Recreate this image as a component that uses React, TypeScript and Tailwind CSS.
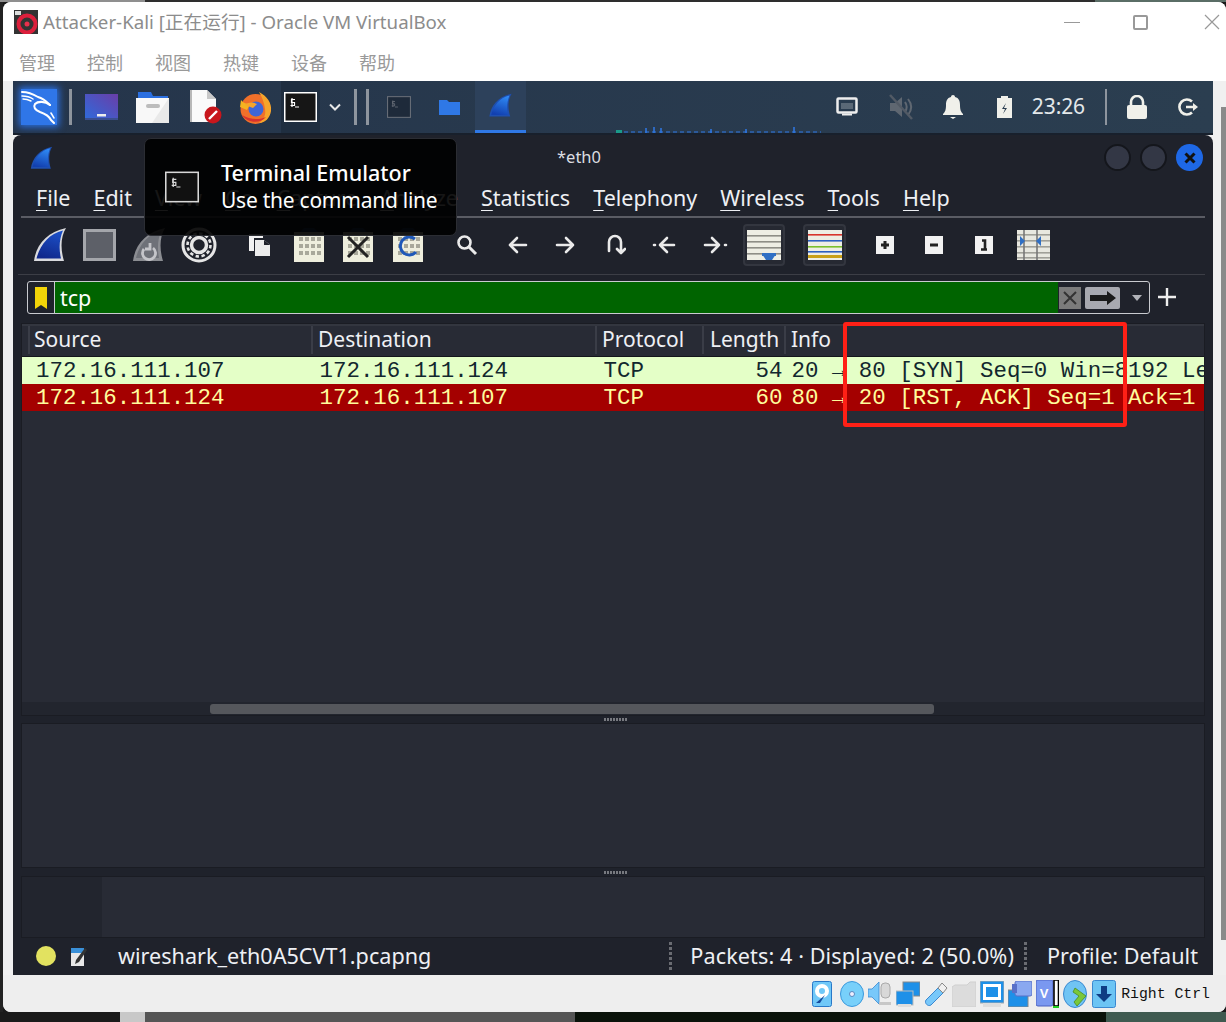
import React from "react";

const ui = { fontFamily: '"Noto Sans","Noto Sans CJK SC",sans-serif' };
const mono = { fontFamily: '"Liberation Mono",monospace' };

const Fin = ({ w = 34, h = 36, c1 = "#1f6fe8", c2 = "#122f96", edge = "#d9dade" }: { w?: number; h?: number; c1?: string; c2?: string; edge?: string }) => {
  const id = "f" + c1.slice(1) + edge.slice(1);
  return (
    <svg width={w} height={h} viewBox="0 0 34 36">
      <defs>
        <linearGradient id={id} x1="0.7" y1="0" x2="0.4" y2="1">
          <stop offset="0" stopColor={c1} />
          <stop offset="1" stopColor={c2} />
        </linearGradient>
      </defs>
      <path d="M1 34C3 18 14 5 33 1c-5 8-6 20-2 33z" fill={edge} />
      <path d="M3.500 31.500C7 18 16 6.500 30 3.500c-3.500 8-4.500 18-2 28z" fill={`url(#${id})`} />
    </svg>
  );
};

const KaliTile = () => (
  <div className="w-[36px] h-[36px] bg-[#2f76e8] shadow-[0_0_7px_2px_#2a6fe0]">
    <svg width="36" height="36" viewBox="0 0 36 36" fill="none" stroke="#fff" strokeLinecap="round" strokeLinejoin="round">
      <path d="M1 3c6 0 11 2 16 5 4 1 8 4 12 8" strokeWidth="2" />
      <path d="M1 7c4 0 8 1 11 3M2 10c3 0 6 1 8 2" strokeWidth="1.5" />
      <path d="M29 16c-5-4-12-4-15-1-2 3 0 6 5 8 6 2 9 4 11 8l3 3" strokeWidth="2.100" />
      <path d="M30 24l3 5" strokeWidth="1.500" />
    </svg>
  </div>
);

const Workspace = () => (
  <svg width="33" height="27" viewBox="0 0 33 27">
    <defs>
      <linearGradient id="ws" x1="0" y1="1" x2="1" y2="0">
        <stop offset="0" stopColor="#2e6bdc" />
        <stop offset="1" stopColor="#6a3ea8" />
      </linearGradient>
    </defs>
    <rect width="33" height="26" fill="url(#ws)" />
    <rect x="0" y="24" width="33" height="2" fill="#3a4e90" />
    <rect x="12" y="20" width="9" height="2.5" fill="#eee" />
  </svg>
);

const FolderOpen = () => (
  <svg width="33" height="32" viewBox="0 0 33 32">
    <path d="M2 1h13l2 4h15v6H2z" fill="#2b6fe0" />
    <rect y="7" width="33" height="25" fill="#f8f8f8" />
    <path d="M33 7v25H16z" fill="#e9e9e9" />
    <rect x="10" y="13" width="14" height="4" rx="2" fill="#bcbcbc" />
  </svg>
);

const DocEdit = () => (
  <svg width="32" height="34" viewBox="0 0 32 34">
    <path d="M1 0h16l9 9v23H1z" fill="#fafafa" />
    <path d="M17 0l9 9h-9z" fill="#c8c8c8" />
    <rect width="2" height="32" fill="#b8b8b8" />
    <circle cx="23" cy="25" r="8.5" fill="#c8161c" />
    <path d="M19 29l8-8" stroke="#fff" strokeWidth="2.4" />
  </svg>
);

const Firefox = () => (
  <svg width="33" height="33" viewBox="0 0 33 33">
    <circle cx="16.5" cy="18" r="15" fill="#f0702a" />
    <path d="M20 1c8 4 13 11 12 19-1 7-6 12-12 12 5-4 7-8 6-14-1-7-3-12-6-17z" fill="#f7a52b" />
    <path d="M2 9c2 3 6 4 9 4l-3 6-7-3z" fill="#f5b320" />
    <circle cx="17" cy="18" r="7.5" fill="#3f66d8" />
    <path d="M6 14c4-3 8-3 12-1l-4 4z" fill="#f7a52b" />
    <path d="M3 24c4 7 17 10 24 2-6 3-16 3-24-2z" fill="#d8322e" />
  </svg>
);

const Term = ({ w = 33, h = 30, c = "#fff", bg = "#161616" }: { w?: number; h?: number; c?: string; bg?: string }) => (
  <svg width={w} height={h} viewBox="0 0 33 30">
    <rect x=".75" y=".75" width="31.5" height="28.5" fill={bg} stroke={c} strokeWidth="1.5" />
    <path d="M8 6v9M11 7.500H7.500v3h3v3H6.500M11 15h4" stroke={c} strokeWidth="1.2" fill="none" />
  </svg>
);

const Chevron = () => (
  <svg width="12" height="8" viewBox="0 0 12 8" fill="none">
    <path d="M1 1.500l5 5 5-5" stroke="#e8e8e8" strokeWidth="2" />
  </svg>
);

const BlueFolder = () => (
  <svg width="21" height="15" viewBox="0 0 21 15">
    <path d="M0 0h8l2 2h11v13H0z" fill="#2f78e6" />
  </svg>
);

const Net = () => (
  <svg width="22" height="20" viewBox="0 0 22 20" fill="none">
    <rect x="1.500" y="1.500" width="19" height="14" rx="1" stroke="#eee" strokeWidth="2.500" />
    <path d="M5 6h12v6H5z" fill="#eee" opacity=".25" />
    <path d="M6 16.500h10v2H6z" fill="#eee" />
  </svg>
);

const Muted = () => (
  <svg width="28" height="28" viewBox="0 0 28 28" fill="none">
    <path d="M3 10h5l7-6v20l-7-6H3z" fill="#5f6771" />
    <path d="M18 9c2 3 2 7 0 10M21 6c4 5 4 11 0 16" stroke="#5f6771" strokeWidth="2" />
    <path d="M3 2l22 24" stroke="#525a65" strokeWidth="2.500" />
  </svg>
);

const Bell = () => (
  <svg width="22" height="24" viewBox="0 0 22 24">
    <path d="M11 0c1.200 0 2 .8 2 2 4 1 5 4 5 8 0 5 1 7 3 9v1H1v-1c2-2 3-4 3-9 0-4 1-7 5-8 0-1.200.8-2 2-2z" fill="#f0f0ea" />
    <path d="M8 22h6l-3 2z" fill="#f0f0ea" />
  </svg>
);

const Battery = () => (
  <svg width="15" height="22" viewBox="0 0 15 22">
    <path d="M4 0h7v2h4v20H0V2h4z" fill="#f0f0ea" />
    <path d="M9 7l-4 6h3l-2 5 4-6H7z" fill="#2a3d50" />
  </svg>
);

const Lock = () => (
  <svg width="20" height="24" viewBox="0 0 20 24" fill="none">
    <path d="M4 11V7a6 6 0 0 1 12 0v4" stroke="#f0f0ea" strokeWidth="2.600" />
    <rect y="10" width="20" height="14" rx="2" fill="#f0f0ea" />
  </svg>
);

const Logout = () => (
  <svg width="22" height="20" viewBox="0 0 22 20" fill="none">
    <path d="M15 4.500A7.500 7.500 0 1 0 15 15.500" stroke="#f0f0ea" strokeWidth="2.600" />
    <path d="M9 10h9" stroke="#f0f0ea" strokeWidth="2.600" />
    <path d="M16 6l5 4-5 4z" fill="#f0f0ea" />
  </svg>
);

const StopIcon = () => <div className="w-[33px] h-[32px] bg-[#5d6068] border-[3px] border-[#a4a6ab]" />;

const RestartFin = () => (
  <svg width="34" height="36" viewBox="0 0 34 36">
    <path d="M1 34C3 18 14 5 33 1c-5 8-6 20-2 33z" fill="#8b8d92" />
    <path d="M4 31C7 18 16 7 29 4c-3 8-4 17-2 27z" fill="#6e7178" />
    <path d="M12 22a6.500 6.500 0 1 0 9 -1M18 16v6h-5" fill="none" stroke="#c4c5c9" strokeWidth="2.800" />
  </svg>
);

const Gear = () => (
  <svg width="36" height="36" viewBox="0 0 36 36" fill="none">
    <circle cx="18" cy="18" r="16" stroke="#e6e6e6" strokeWidth="3" />
    <circle cx="18" cy="18" r="7.500" stroke="#e6e6e6" strokeWidth="3.500" />
    <circle cx="18" cy="18" r="11.500" stroke="#e6e6e6" strokeWidth="2.600" strokeDasharray="3.400 2.600" />
  </svg>
);

const OpenFile = () => (
  <svg width="22" height="22" viewBox="0 0 22 22">
    <path d="M0 0h14v4H5v13H0z" fill="#f2f2f2" />
    <path d="M6 6h9l6 5v11H6z" fill="#ececec" />
    <path d="M15 6v5h6z" fill="#1f222b" />
  </svg>
);

const Sheet = ({ children }: { children?: React.ReactNode }) => (
  <div className="relative w-[30px] h-[34px]">
    <svg width="30" height="34" viewBox="0 0 30 34" className="absolute inset-0">
      <path d="M10 0h10l4 4H6z" fill="#24456f" />
      <rect y="4" width="30" height="30" fill="#eeeedd" />
      <g fill="#a8a89a">
        {[9, 16, 23].map((y) => [5, 11, 17, 23].map((x) => <rect key={`${x}-${y}`} x={x} y={y} width="4" height="4" />))}
      </g>
    </svg>
    {children}
  </div>
);

const Glyph = ({ d, w = 24, h = 22 }: { d: string; w?: number; h?: number }) => (
  <svg width={w} height={h} viewBox={`0 0 ${w} ${h}`} fill="none" stroke="#eaeaea" strokeWidth="2.600" strokeLinecap="round" strokeLinejoin="round">
    <path d={d} />
  </svg>
);

const Search = () => (
  <svg width="22" height="22" viewBox="0 0 22 22" fill="none">
    <circle cx="8.500" cy="8.500" r="6" stroke="#eaeaea" strokeWidth="2.600" />
    <path d="M13 13l7 7" stroke="#eaeaea" strokeWidth="3" />
  </svg>
);

const AutoScroll = () => (
  <svg width="34" height="30" viewBox="0 0 34 30">
    <rect width="34" height="30" fill="#eeeee4" />
    {[5, 11, 17, 23].map((y) => (
      <rect key={y} y={y} width="34" height="1.600" fill="#8e8e86" />
    ))}
    <path d="M15 24h14l-4 6h-6z" fill="#2f6fc4" />
    <rect x="15" y="23" width="14" height="3" fill="#2f6fc4" />
  </svg>
);

const Colorize = () => (
  <svg width="34" height="30" viewBox="0 0 34 30">
    <rect width="34" height="30" fill="#eeeee4" />
    <rect y="4" width="34" height="1.600" fill="#d8342c" />
    <rect y="10" width="34" height="1.600" fill="#2c5fc0" />
    <rect y="16" width="34" height="1.600" fill="#7ac02c" />
    <rect y="21" width="34" height="1.600" fill="#2c5fc0" />
    <rect y="25" width="34" height="3" fill="#c8a018" />
  </svg>
);

const Tile = ({ k }: { k: string }) => (
  <svg width="18" height="18" viewBox="0 0 18 18">
    <rect width="18" height="18" fill="#f2f2f2" />
    {k === "+" && <path d="M9 5v8M5 9h8" stroke="#222" strokeWidth="3" />}
    {k === "-" && <path d="M5 9h8" stroke="#222" strokeWidth="3" />}
    {k === "1" && <path d="M7 4.500h3v9M6 13.500h6" stroke="#222" strokeWidth="2.600" fill="none" />}
  </svg>
);

const ResizeCols = () => (
  <svg width="33" height="30" viewBox="0 0 33 30">
    <rect width="33" height="30" fill="#e8e8e0" />
    {[4, 10, 16, 22, 27].map((y) => (
      <rect key={y} y={y} width="33" height="1.600" fill="#a0a098" />
    ))}
    <path d="M7 0v30M20 0v30" stroke="#777" strokeWidth="1.600" />
    <path d="M3 6l5 5-5 5zM24 6l-5 5 5 5z" fill="#2f6fc4" />
  </svg>
);

const HddIcon = () => (
  <svg width="20" height="26" viewBox="0 0 20 26">
    <rect x=".5" y=".5" width="19" height="25" rx="2" fill="#70c8f8" stroke="#2878c8" />
    <circle cx="10" cy="10" r="5" fill="none" stroke="#fff" strokeWidth="4" />
    <path d="M13 14l-5 8H4z" fill="#154a9c" />
  </svg>
);
const Cd = () => (
  <svg width="24" height="26" viewBox="0 0 24 26">
    <ellipse cx="12" cy="13" rx="11.500" ry="12.500" fill="#78d0fa" stroke="#3a98dc" />
    <circle cx="12" cy="13" r="2.500" fill="#eef" stroke="#5a8ac0" />
  </svg>
);
const Audio = () => (
  <svg width="24" height="26" viewBox="0 0 24 26">
    <path d="M0 8h4l7-7v22l-7-7H0z" fill="#78c8fa" stroke="#3a88d0" strokeWidth=".8" />
    <rect x="13" y="2" width="9" height="15" rx="4" fill="#d8d8d8" stroke="#aaa" />
    <path d="M11 21h12v3H11z" fill="#c8c8c8" />
  </svg>
);
const Nets = () => (
  <svg width="24" height="26" viewBox="0 0 24 26">
    <rect x="7" y="1" width="17" height="14" fill="#1e90e8" stroke="#888" />
    <rect x="0" y="10" width="17" height="14" fill="#1e90e8" stroke="#bbb" />
    <rect x="2" y="23" width="13" height="3" fill="#ddd" />
  </svg>
);
const Usb = () => (
  <svg width="24" height="26" viewBox="0 0 24 26">
    <path d="M2 19L14 7l5 5L7 24c-3 2-7-2-5-5z" fill="#78c8fa" stroke="#3a88d0" />
    <path d="M14 7l4-5 5 5-4 5z" fill="#f0f0f0" stroke="#888" />
  </svg>
);
const Shared = () => (
  <svg width="24" height="26" viewBox="0 0 24 26">
    <path d="M0 6l3-2h12l3-3h6v25H0z" fill="#dcdcdc" stroke="#cfcfcf" />
  </svg>
);
const Display = () => (
  <svg width="24" height="26" viewBox="0 0 24 26">
    <rect width="24" height="22" fill="#1e90e8" stroke="#aaa" />
    <rect x="3" y="3" width="18" height="16" fill="#fff" />
    <rect x="6" y="6" width="12" height="10" fill="#1e90e8" />
    <rect x="3" y="22" width="18" height="4" fill="#ddd" />
  </svg>
);
const Rec = () => (
  <svg width="24" height="26" viewBox="0 0 24 26">
    <rect x="0" y="9" width="20" height="17" fill="#1e90e8" stroke="#888" />
    <rect x="7" y="0" width="17" height="15" rx="2" fill="#8aa8f0" stroke="#5870c8" />
    <rect x="4" y="3" width="5" height="9" fill="#5870c8" />
  </svg>
);
const Vt = () => (
  <svg width="23" height="28" viewBox="0 0 23 28">
    <rect x="0" y="0" width="17" height="26" rx="2" fill="#7a98f0" stroke="#4a60c0" />
    <text x="8" y="18" fontSize="13" fontWeight="700" fontFamily="Liberation Sans" fill="#fff" textAnchor="middle">V</text>
    <rect x="18" y="0" width="4.500" height="26" fill="#fff" stroke="#000" strokeWidth="1.600" />
    <rect x="17" y="26" width="6" height="2" fill="#20d020" />
  </svg>
);
const Mouse = () => (
  <svg width="25" height="28" viewBox="0 0 25 28">
    <ellipse cx="12" cy="14" rx="11.500" ry="13.500" fill="#70c4f4" stroke="#3a88d0" />
    <path d="M12 8l11 8-9 10-3-4 5-6-6-4z" fill="#7ac83a" stroke="#4a8a20" strokeWidth=".8" />
  </svg>
);
const Capture = () => (
  <svg width="24" height="28" viewBox="0 0 24 28">
    <rect x=".5" y=".5" width="23" height="27" rx="2" fill="#6cc4f4" stroke="#3a88d0" />
    <path d="M9 6h6v8h5l-8 8-8-8h5z" fill="#0f3c84" />
  </svg>
);

const Menu = ({ t, rest }: { t: string; rest: string }) => (
  <span>
    <span className="underline underline-offset-[4px] decoration-1">{t}</span>
    {rest}
  </span>
);

const Grip = () => (
  <div className="flex justify-center gap-px pl-[5px]">
    {[0, 1, 2, 3, 4, 5, 6, 7].map((i) => (
      <div key={i} className="w-[2px] h-[3px] bg-[#77797f]" />
    ))}
  </div>
);

const DotSep = () => (
  <div className="flex flex-col gap-[2px]">
    {[0, 1, 2, 3, 4, 5].map((i) => (
      <div key={i} className="w-[3px] h-[3px] bg-[#6a6c72]" />
    ))}
  </div>
);

const Row = ({ cells, cls }: { cells: string[]; cls: string }) => (
  <div className={`flex h-[27px] pt-[2px] items-center whitespace-pre text-[22.45px] overflow-hidden ${cls}`} style={mono}>
    <span className="w-[291px] pl-[14px] shrink-0">{cells[0]}</span>
    <span className="w-[283.5px] pl-[6.5px] shrink-0">{cells[1]}</span>
    <span className="w-[110px] pl-[7px] shrink-0">{cells[2]}</span>
    <span className="w-[76px] text-right shrink-0">{cells[3]}</span>
    <span className="pl-[9px]">{cells[4]}</span>
  </div>
);

const Head = ({ t, w, pl = "pl-[5px]" }: { t: string; w: string; pl?: string }) => (
  <div className={`${w} ${pl} shrink-0 h-full flex items-center border-r-2 border-[#3a3d47]`}>{t}</div>
);

export default function App() {
  return (
    <div className="w-[1226px] h-[1022px] bg-[#1a1a1a] flex flex-col overflow-hidden" style={ui}>
      <div className="h-[2px] flex shrink-0">
        <div className="w-[145px] bg-[#8f8f8f]" />
        <div className="w-[950px] bg-[#2e2e2e]" />
        <div className="flex-1 bg-[#5a6d66]" />
      </div>
      <div className="flex-1 flex min-h-0">
        <div className="w-[3px] bg-[#222] shrink-0" />
        <div className="flex-1 flex flex-col bg-[#f0f0f0] rounded-lg overflow-hidden relative">
          <div className="bg-white h-[79px] shrink-0 flex flex-col">
            <div className="flex items-center h-[40px]">
              <svg width="24" height="24" viewBox="0 0 24 24" className="ml-[11px] mr-[5px]">
                <rect width="24" height="24" fill="#333" />
                <rect x="1" y="1" width="6" height="4" fill="#ddd" />
                <circle cx="13" cy="14" r="8.500" fill="none" stroke="#dc1f3c" strokeWidth="4" />
                <circle cx="13" cy="14" r="2.500" fill="#e8304c" />
              </svg>
              <span className="text-[18.7px] text-[#8c8c8c] whitespace-nowrap">Attacker-Kali [正在运行] - Oracle VM VirtualBox</span>
              <div className="ml-auto flex items-center pr-[6px]">
                <div className="w-[16px] h-px bg-[#999]" />
                <div className="ml-[53px] w-[15px] h-[15px] border-2 border-[#999] rounded-[2px]" />
                <svg width="16" height="16" viewBox="0 0 16 16" className="ml-[56px]">
                  <path d="M1 1l14 14M15 1L1 15" stroke="#999" strokeWidth="1.200" />
                </svg>
              </div>
            </div>
            <div className="flex gap-[32px] pl-[16px] pt-[5px] text-[18px] text-[#999] leading-[32px]">
              {["管理", "控制", "视图", "热键", "设备", "帮助"].map((m) => (
                <span key={m}>{m}</span>
              ))}
            </div>
          </div>

          <div className="flex-1 flex min-h-0">
            <div className="w-[10px] shrink-0" />
            <div className="w-[1200px] flex flex-col relative">
              <div className="h-[52px] shrink-0 bg-gradient-to-r from-[#25354b] to-[#2b3e50] flex items-center relative">
                <div className="ml-[8px]"><KaliTile /></div>
                <div className="w-[3px] h-[36px] bg-[#8e959e] ml-[12px]" />
                <div className="ml-[13px]"><Workspace /></div>
                <div className="ml-[18px]"><FolderOpen /></div>
                <div className="ml-[21px]"><DocEdit /></div>
                <div className="ml-[17px]"><Firefox /></div>
                <div className="ml-[9px] h-[52px] w-[39px] bg-[#1f2e40] flex items-center justify-center"><Term /></div>
                <div className="ml-[9px]"><Chevron /></div>
                <div className="w-[3px] h-[36px] bg-[#8e959e] ml-[13px]" />
                <div className="w-[3px] h-[36px] bg-[#8e959e] ml-[9px]" />
                <div className="ml-[18px]"><Term w={24} h={22} c="#666c76" bg="#1e2a3a" /></div>
                <div className="ml-[28px]"><BlueFolder /></div>
                <div className="ml-[15px] h-[52px] w-[51px] bg-[#2d415b] border-b-[3px] border-[#2f78e6] flex items-center justify-center">
                  <Fin w={25} h={25} edge="#1e4fb0" c1="#2f8af5" c2="#1240b0" />
                </div>
                <div className="ml-auto flex items-center">
                  <Net />
                  <div className="ml-[29px]"><Muted /></div>
                  <div className="ml-[27px]"><Bell /></div>
                  <div className="ml-[33px]"><Battery /></div>
                  <span className="ml-[20px] text-[21px] text-[#e4e8ea] tracking-[-0.1px]">23:26</span>
                  <div className="w-[2px] h-[36px] bg-[#8e959e] ml-[20px]" />
                  <div className="ml-[20px]"><Lock /></div>
                  <div className="ml-[30px] mr-[14px]"><Logout /></div>
                </div>
                <svg width="205" height="6" viewBox="0 0 205 6" className="absolute left-[603px] bottom-0">
                  <rect x="0" y="3" width="6" height="3" fill="#1a9a8a" />
                  <path d="M8 5h200" stroke="#2f78e6" strokeWidth="1" strokeDasharray="4 3" />
                  <path d="M30 1v5M38 0v6M45 1v5M95 2v4M130 2v4M178 0v6" stroke="#2f78e6" strokeWidth="1.500" />
                </svg>
              </div>

              <div className="h-[2px] shrink-0 bg-[#18202c]" />

              <div className="flex-1 bg-[#1f222b] rounded-t-lg flex flex-col min-h-0 text-[#eef0f4]">
                <div className="h-[45px] shrink-0 flex items-center relative">
                  <div className="ml-[17px]"><Fin w={23} h={24} edge="#1e4fb0" c1="#2f8af5" c2="#1240b0" /></div>
                  <span className="absolute left-[544px] top-[10px] text-[16.5px] text-[#dcdee2]">*eth0</span>
                  <div className="ml-auto flex gap-[9px] pr-[10px]">
                    <div className="w-[27px] h-[27px] rounded-full bg-[#333745] border-2 border-[#14161c]" />
                    <div className="w-[27px] h-[27px] rounded-full bg-[#333745] border-2 border-[#14161c]" />
                    <div className="w-[27px] h-[27px] rounded-full bg-[#1e68e6] flex items-center justify-center">
                      <svg width="12" height="12" viewBox="0 0 12 12"><path d="M1.500 1.500l9 9M10.500 1.500l-9 9" stroke="#111" strokeWidth="3" /></svg>
                    </div>
                  </div>
                </div>

                <div className="h-[36px] shrink-0 flex items-center pl-[23px] gap-[23px] text-[21.5px] whitespace-nowrap">
                  <Menu t="F" rest="ile" />
                  <Menu t="E" rest="dit" />
                  <Menu t="V" rest="iew" />
                  <Menu t="G" rest="o" />
                  <Menu t="C" rest="apture" />
                  <Menu t="A" rest="nalyze" />
                  <Menu t="S" rest="tatistics" />
                  <Menu t="T" rest="elephony" />
                  <Menu t="W" rest="ireless" />
                  <Menu t="T" rest="ools" />
                  <Menu t="H" rest="elp" />
                </div>

                <div className="mx-[8px] h-[2px] shrink-0 bg-[#5a5c64]" />

                <div className="h-[56px] pb-[2px] shrink-0 flex items-center">
                  <div className="ml-[20px]"><Fin c1="#1c50c8" c2="#10288c" /></div>
                  <div className="ml-[16px]"><StopIcon /></div>
                  <div className="ml-[16px]"><RestartFin /></div>
                  <div className="ml-[15px]"><Gear /></div>
                  <div className="ml-[32px]"><OpenFile /></div>
                  <div className="ml-[23px]"><Sheet /></div>
                  <div className="ml-[19px]">
                    <Sheet>
                      <svg width="30" height="34" viewBox="0 0 30 34" className="absolute inset-0">
                        <path d="M5 9l20 20M25 9L5 29" stroke="#222" strokeWidth="3" />
                      </svg>
                    </Sheet>
                  </div>
                  <div className="ml-[20px]">
                    <Sheet>
                      <svg width="30" height="34" viewBox="0 0 30 34" className="absolute inset-0" fill="none">
                        <path d="M22 11a9 9 0 1 0 1 13" stroke="#1f58b8" strokeWidth="3" />
                      </svg>
                    </Sheet>
                  </div>
                  <div className="ml-[33px]"><Search /></div>
                  <div className="ml-[28px]"><Glyph d="M11 3l-7 7 7 7M4 10h16" w={22} h={20} /></div>
                  <div className="ml-[27px]"><Glyph d="M11 3l7 7-7 7M18 10H2" w={22} h={20} /></div>
                  <div className="ml-[27px]"><Glyph d="M5 17V8a6 6 0 0 1 12 0v10M13 15l4 4 4-4" w={22} h={22} /></div>
                  <div className="ml-[26px]"><Glyph d="M15 3l-7 7 7 7M8 10h14M2 10h1" w={25} h={20} /></div>
                  <div className="ml-[26px]"><Glyph d="M9 3l7 7-7 7M16 10H2M22 10h1" w={25} h={20} /></div>
                  <div className="ml-[15px] w-[42px] h-[42px] bg-[#262932] border-2 border-[#33363f] rounded flex items-center justify-center"><AutoScroll /></div>
                  <div className="ml-[18px] w-[43px] h-[42px] bg-[#262932] border-2 border-[#33363f] rounded flex items-center justify-center"><Colorize /></div>
                  <div className="ml-[30px]"><Tile k="+" /></div>
                  <div className="ml-[31px]"><Tile k="-" /></div>
                  <div className="ml-[32px]"><Tile k="1" /></div>
                  <div className="ml-[24px]"><ResizeCols /></div>
                </div>

                <div className="ml-[5px] mr-[8px] h-px shrink-0 bg-[#3c3e46]" />

                <div className="h-[48px] pt-[6px] shrink-0 flex items-start">
                  <div className="ml-[14px] w-[1123px] h-[33px] border-[1.5px] border-[#c9cbd0] rounded-[3px] flex items-center">
                    <div className="w-[27px] h-full border-r-[1.5px] border-[#c9cbd0] flex items-center justify-center">
                      <svg width="12" height="22" viewBox="0 0 12 22"><path d="M0 0h12v22l-6-4-6 4z" fill="#f2d408" /></svg>
                    </div>
                    <div className="w-[1003px] h-full bg-[#006400] pl-[5px] pt-[2px] flex items-center text-[21.5px] text-white">tcp</div>
                    <div className="ml-px w-[22px] h-[22px] bg-[#7b7b7b] flex items-center justify-center">
                      <svg width="16" height="16" viewBox="0 0 16 16"><path d="M2 2l12 12M14 2L2 14" stroke="#333" strokeWidth="2" /></svg>
                    </div>
                    <div className="ml-[4px] w-[35px] h-[22px] bg-[#a8a9b0] rounded-[2px] flex items-center justify-center">
                      <svg width="26" height="14" viewBox="0 0 26 14"><path d="M0 4h17V0l9 7-9 7v-4H0z" fill="#1a1a1a" /></svg>
                    </div>
                    <svg width="10" height="6" viewBox="0 0 10 6" className="ml-[12px]"><path d="M0 0h10L5 6z" fill="#b0b2b8" /></svg>
                  </div>
                  <svg width="20" height="20" viewBox="0 0 20 20" className="ml-[7px] mt-[6px]"><path d="M10 1v18M1 10h18" stroke="#eee" strokeWidth="2.400" /></svg>
                </div>

                <div className="mx-[8px] flex-1 min-h-0 flex flex-col">
                  <div className="h-[393px] shrink-0 bg-[#282b35] border border-[#1a1c23] flex flex-col">
                    <div className="h-[32px] pb-[2px] shrink-0 flex items-center text-[21px] border-t-2 border-[#33363f]">
                      <div className="w-[8px] h-full border-r-2 border-[#3a3d47]" />
                      <Head t="Source" w="w-[283px]" pl="pl-[4px]" />
                      <Head t="Destination" w="w-[284px]" />
                      <Head t="Protocol" w="w-[107px]" />
                      <Head t="Length" w="w-[82px]" pl="pl-[6px]" />
                      <div className="pl-[5px]">Info</div>
                    </div>
                    <div className="border-t border-[#14161c]" />
                    <Row cls="bg-[#e4ffc7] text-[#12272e]" cells={["172.16.111.107", "172.16.111.124", "TCP", "54", "20 → 80 [SYN] Seq=0 Win=8192 Len=0"]} />
                    <Row cls="bg-[#a40000] text-[#fffc9c]" cells={["172.16.111.124", "172.16.111.107", "TCP", "60", "80 → 20 [RST, ACK] Seq=1 Ack=1 Win=0"]} />
                    <div className="flex-1" />
                    <div className="h-[13px] shrink-0 bg-[#22252e] flex items-center">
                      <div className="ml-[188px] w-[724px] h-[10px] rounded-[3px] bg-[#55575c]" />
                    </div>
                  </div>
                  <div className="h-[7px] shrink-0 flex items-center justify-center"><Grip /></div>
                  <div className="h-[145px] shrink-0 bg-[#282b35] border border-[#1a1c23]" />
                  <div className="h-[8px] shrink-0 flex items-center justify-center"><Grip /></div>
                  <div className="h-[62px] shrink-0 bg-[#282b35] border border-[#1a1c23] flex">
                    <div className="w-[80px] bg-[#22252e]" />
                  </div>
                </div>

                <div className="h-[38px] shrink-0 flex items-center text-[21.6px] whitespace-nowrap">
                  <div className="ml-[23px] w-[20px] h-[20px] rounded-full bg-[#e2e260]" />
                  <svg width="18" height="20" viewBox="0 0 18 20" className="ml-[14px]">
                    <path d="M1 2h13v18H1z" fill="#e8e8e8" />
                    <path d="M1 2h13v5H1z" fill="#3a90d8" />
                    <path d="M6 14l9-12 2 2-8 12-4 2z" fill="#333" />
                  </svg>
                  <span className="ml-[30px]">wireshark_eth0A5CVT1.pcapng</span>
                  <div className="ml-[238px]"><DotSep /></div>
                  <span className="ml-[18px] tracking-[0.1px]">Packets: 4 · Displayed: 2 (50.0%)</span>
                  <div className="ml-[10px]"><DotSep /></div>
                  <span className="ml-[20px]">Profile: Default</span>
                </div>
              </div>
            </div>
            <div className="flex-1 flex justify-end">
              <div className="w-[5px] h-[833px] mt-[26px] bg-[#8a8a8a]" />
            </div>
          </div>

          <div className="h-[37px] shrink-0 bg-[#eeeeee] flex items-center justify-end gap-[4px] pr-[16px]">
            <div className="mr-[4px]"><HddIcon /></div>
            <Cd />
            <Audio />
            <Nets />
            <Usb />
            <Shared />
            <Display />
            <Rec />
            <Vt />
            <Mouse />
            <Capture />
            <span className="text-[14.8px] text-[#111] whitespace-nowrap ml-px mt-[1px]" style={mono}>Right Ctrl</span>
          </div>

          <div className="absolute left-[141px] top-[136px] w-[313px] h-[98px] rounded-[7px] bg-[#000000e8] border border-[#2b2d33] flex items-center text-white">
            <div className="ml-[20px]"><Term w={34} h={32} c="#d8d8d8" bg="#111" /></div>
            <div className="ml-[22px] flex flex-col mt-[-2px]">
              <span className="text-[21.5px] leading-[29px] font-medium">Terminal Emulator</span>
              <span className="text-[21px] leading-[27px] tracking-[-0.25px]">Use the command line</span>
            </div>
          </div>

          <div className="absolute left-[840px] top-[320px] w-[284px] h-[105px] border-[4px] border-[#ff2016] rounded-[3px]" />
        </div>
      </div>
      <div className="h-[10px] shrink-0 flex">
        <div className="w-[120px] bg-[#1a1a1a]" />
        <div className="w-[25px] bg-[#c8c8c8]" />
        <div className="w-[430px] bg-[#555]" />
        <div className="w-[531px] bg-[#0a120a]" />
        <div className="flex-1 bg-[#3f5a50]" />
      </div>
    </div>
  );
}
